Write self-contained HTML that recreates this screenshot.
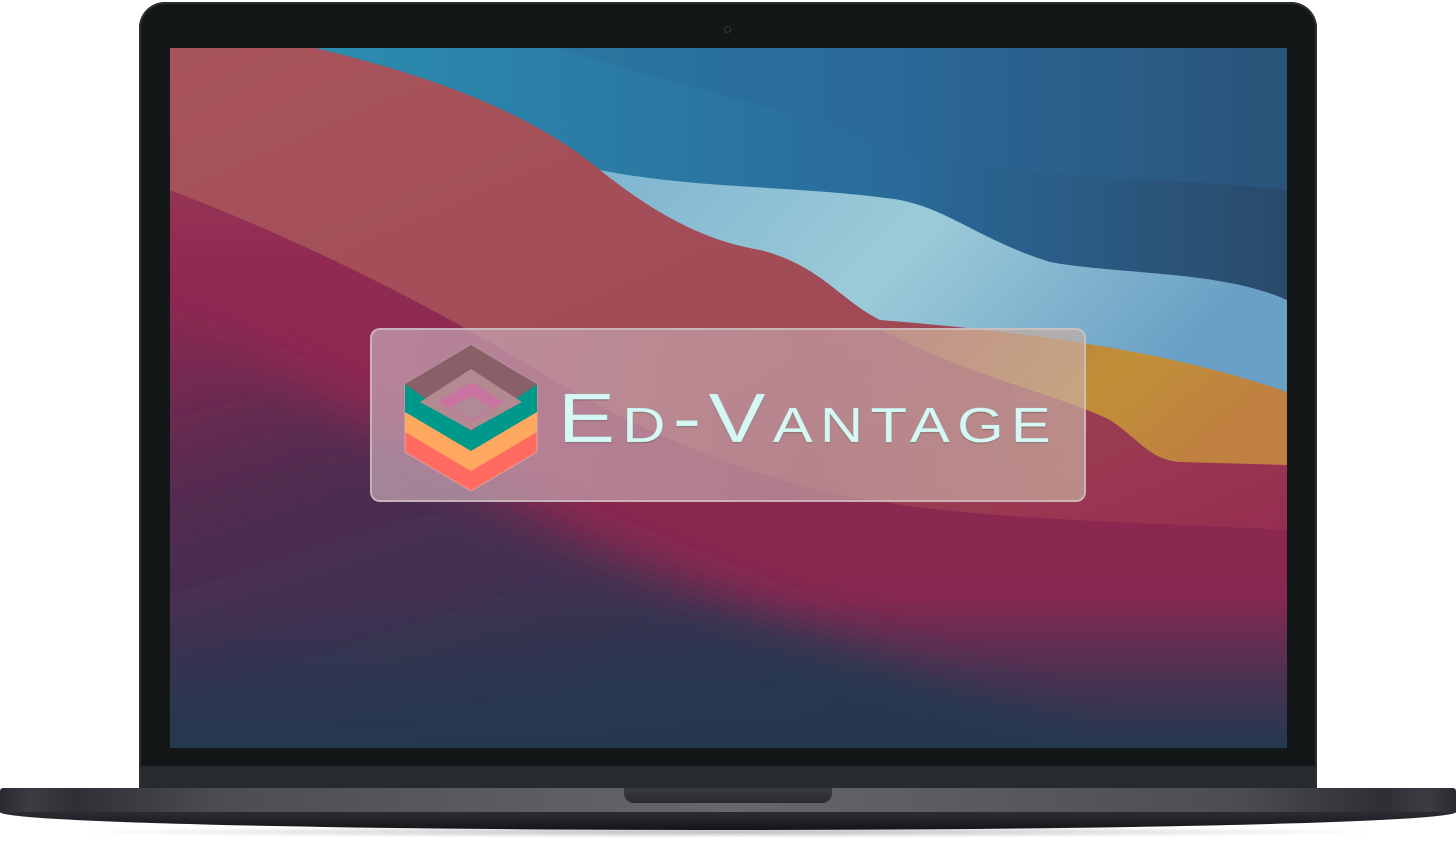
<!DOCTYPE html>
<html><head><style>
html,body{margin:0;padding:0;background:#fff;width:1456px;height:848px;overflow:hidden;position:relative;font-family:"Liberation Sans",sans-serif}
.lid{position:absolute;left:139px;top:2px;width:1178px;height:790px;background:#131718;border-radius:26px 26px 0 0;box-shadow:inset 0 0 0 2px #2a2f32}
.chin{position:absolute;left:141px;top:766px;width:1174px;height:24px;background:#272b2e}
.screen{position:absolute;left:170px;top:48px;width:1117px;height:700px;overflow:hidden}
.cam{position:absolute;left:724px;top:26px;width:5px;height:5px;border:1px solid #333;border-radius:50%}
.base{position:absolute;left:0;top:788px;width:1456px;height:24px;background:linear-gradient(90deg,#2a2b30 0,#3c3d42 2%,#2e2f34 5%,#4c4d52 15%,#66676c 50%,#4c4d52 85%,#2e2f34 95%,#3c3d42 98%,#2a2b30 100%);border-radius:3px 3px 0 0}
.bottom{position:absolute;left:0;top:812px;width:1456px;height:18px;background:linear-gradient(#2c2d33,#141519);border-radius:0 0 50% 50%/0 0 100% 100%}
.shadow{position:absolute;left:60px;top:826px;width:1336px;height:12px;background:radial-gradient(ellipse at center,rgba(0,0,0,.25),rgba(0,0,0,0) 70%)}
.notch{position:absolute;left:624px;top:788px;width:208px;height:15px;background:linear-gradient(#3a3b40,#2a2b30);border-radius:0 0 10px 10px}
.card{position:absolute;left:370px;top:328px;width:716px;height:174px;border-radius:10px;background:linear-gradient(100deg,rgba(200,170,185,.7),rgba(195,160,165,.7) 60%,rgba(200,175,160,.7));border:2px solid rgba(210,200,200,.7);box-sizing:border-box}
.txt{position:absolute;left:558px;top:378px;font-size:70px;font-variant:small-caps;color:#d6f8f4;letter-spacing:6px;font-weight:300;line-height:80px;-webkit-text-stroke:0.3px #a9c9c6;text-shadow:0 1px 1px rgba(0,0,0,.25);transform:scaleX(1.22);transform-origin:left}
</style></head><body>
<div class="shadow"></div>
<div class="lid"></div>
<div class="chin"></div>
<div class="cam"></div>
<div class="screen">
<svg width="1117" height="700" viewBox="170 48 1117 700">
<defs>
<filter id="bl" x="-20%" y="-20%" width="140%" height="140%"><feGaussianBlur stdDeviation="25"/></filter>
<linearGradient id="bg" x1="0" y1="0" x2="0" y2="1">
<stop offset="0" stop-color="#a04a58"/><stop offset="0.3" stop-color="#902a52"/><stop offset="0.75" stop-color="#8a2850"/><stop offset="1" stop-color="#6a2a55"/></linearGradient>
<linearGradient id="dark" x1="0" y1="0" x2="0.6" y2="1">
<stop offset="0" stop-color="#5a2850" stop-opacity="0"/><stop offset="0.35" stop-color="#4a2c50" stop-opacity="0.9"/><stop offset="1" stop-color="#233a50"/></linearGradient>
<linearGradient id="red" x1="0" y1="0" x2="1" y2="1">
<stop offset="0" stop-color="#a8545c"/><stop offset="0.6" stop-color="#a04a55"/><stop offset="1" stop-color="#962e50"/></linearGradient>
<linearGradient id="blue" x1="0" y1="0" x2="1" y2="0">
<stop offset="0" stop-color="#2b8db0"/><stop offset="0.6" stop-color="#2a6a9a"/><stop offset="1" stop-color="#2a4a6a"/></linearGradient>
<linearGradient id="light" x1="0" y1="0" x2="1" y2="0.3">
<stop offset="0" stop-color="#7fb5d0"/><stop offset="0.5" stop-color="#9ccbd8"/><stop offset="1" stop-color="#6aa0c5"/></linearGradient>
<linearGradient id="org" x1="0" y1="0" x2="1" y2="0.4">
<stop offset="0" stop-color="#b86a50"/><stop offset="0.6" stop-color="#c09038"/><stop offset="1" stop-color="#c08040"/></linearGradient>
<linearGradient id="bot" x1="0" y1="0" x2="0" y2="1">
<stop offset="0" stop-color="#233a50" stop-opacity="0"/><stop offset="1" stop-color="#26384f"/></linearGradient>
</defs>
<rect x="170" y="48" width="1117" height="700" fill="url(#bg)"/>
<path d="M100 280 C300 380 450 470 560 530 C700 600 900 660 1100 748 L1100 820 L100 820 Z" fill="url(#dark)" filter="url(#bl)"/>
<rect x="170" y="600" width="1117" height="148" fill="url(#bot)"/>
<path d="M170 48 L170 190 C300 240 420 300 520 360 C600 410 700 460 820 490 C950 520 1100 520 1287 530 L1287 48 Z" fill="url(#red)"/>
<path d="M880 330 C980 380 1060 395 1110 420 C1140 440 1150 460 1180 462 L1287 465 L1287 390 C1200 360 1050 320 880 330 Z" fill="url(#org)"/>
<path d="M600 170 C650 210 700 240 760 250 C820 265 840 300 880 320 C1000 330 1150 345 1287 392 L1287 300 C1200 260 1100 270 1040 250 C980 230 950 210 900 195 C800 170 700 180 600 170 Z" fill="url(#light)"/>
<path d="M315 48 C450 80 540 120 600 170 C700 190 800 185 900 200 C950 210 980 240 1050 262 C1120 275 1220 270 1287 300 L1287 48 Z" fill="url(#blue)"/>
<path d="M560 48 C650 80 800 110 900 150 C1000 180 1150 175 1287 190 L1287 48 Z" fill="#2a6895" opacity="0.35"/>
</svg>
</div>
<div class="card"></div>
<svg style="position:absolute;left:400px;top:342px" width="142" height="152" viewBox="0 0 142 152">
<path d="M71 3 L137 42 L137 110 L71 149 L5 110 L5 42 Z" fill="#ff6b60" stroke="rgba(255,255,255,.3)" stroke-linejoin="round"/>
<path d="M5 42 L71 3 L137 42 L137 90 L71 129 L5 90 Z" fill="#ffa860"/>
<path d="M5 42 L71 3 L137 42 L137 70 L71 109 L5 70 Z" fill="#00988a"/>
<path d="M5 42 L71 3 L137 42 L71 89 Z" fill="#8a6068"/>
<path d="M20 60 L71 27 L122 60 L71 88 Z" fill="#b48a92"/>
<path d="M38 60 L71 40 L104 60 L71 80 Z" fill="#c873a0"/>
<path d="M50 66 L71 54 L92 66 L71 78 Z" fill="#b08a96"/>
</svg>
<div class="txt">Ed-Vantage</div>
<div class="base"></div>
<div class="notch"></div>
<div class="bottom"></div>
</body></html>
